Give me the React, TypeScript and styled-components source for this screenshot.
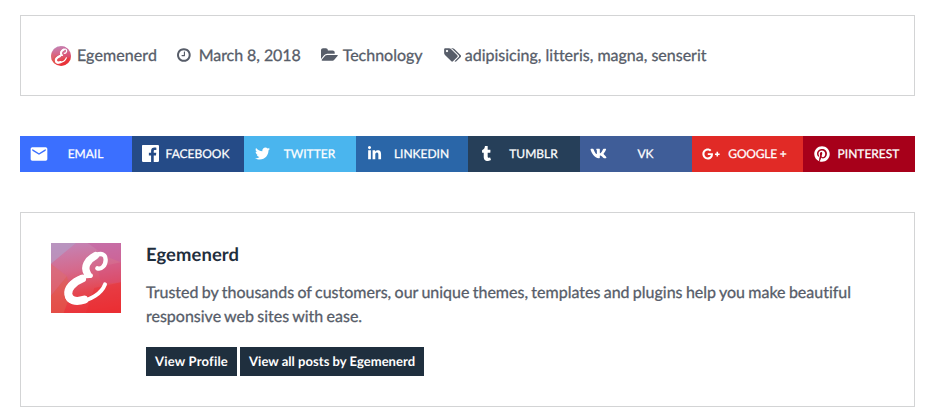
import React from "react";
import styled, { createGlobalStyle } from "styled-components";
import { MdEmail } from "react-icons/md";
import { FaTwitter, FaLinkedinIn, FaTumblr, FaVk, FaGooglePlusG, FaPinterest } from "react-icons/fa";

const GlobalStyle = createGlobalStyle`
  * { box-sizing: border-box; }
  body {
    margin: 0;
    background: #fff;
    color: #575d69;
    font-family: Lato, sans-serif;
    font-size: 16px;
    line-height: 24px;
    font-variant-ligatures: none;
    text-rendering: geometricPrecision;
  }
`;

const Page = styled.main`
  display: flex;
  flex-direction: column;
  gap: 40px;
  width: 929px;
  height: 420px;
  padding: 15px 14px 13px 20px;
`;

const Card = styled.section`
  border: 1px solid #d3d4d5;
  padding: 30px;
`;

const MetaCard = styled(Card)`
  display: flex;
  align-items: center;
  height: 81px;
`;

const MetaItem = styled.div<{ $width?: number; $gap: number }>`
  display: flex;
  align-items: center;
  flex: none;
  width: ${(p) => (p.$width ? `${p.$width}px` : "auto")};
  gap: ${(p) => p.$gap}px;
  white-space: nowrap;
  -webkit-text-stroke: 0.3px currentColor;
`;

const MetaText = styled.span<{ $spacing?: number }>`
  letter-spacing: ${(p) => p.$spacing ?? 0}px;
`;

const MetaIcon = styled.svg`
  display: block;
  flex: none;
  height: 16px;
  margin-bottom: 1px;
  fill: #575d69;
`;

const ShareBar = styled.nav`
  display: grid;
  grid-template-columns: repeat(6, 112px) 111px 112px;
  height: 36px;
`;

const ShareButton = styled.a<{ $color: string }>`
  display: flex;
  align-items: center;
  padding: 0 11px 0 8px;
  background: ${(p) => p.$color};
  color: #fff;
  font-size: 12px;
  line-height: 36px;
  text-transform: uppercase;
`;

const ShareIcon = styled.span`
  display: flex;
  align-items: center;
  justify-content: center;
  flex: none;
  width: 21px;
  height: 20px;
  margin-bottom: 1px;
`;

const ShareLabel = styled.span<{ $tight?: boolean }>`
  flex: 1;
  text-align: center;
  white-space: nowrap;
  padding-left: ${(p) => (p.$tight ? "2px" : "1px")};
  letter-spacing: ${(p) => (p.$tight ? "-0.2px" : "0")};
  -webkit-text-stroke: 0.25px currentColor;
`;

const AuthorCard = styled(Card)`
  display: flex;
  gap: 25px;
  height: 195px;
`;

const Avatar = styled.svg<{ $size: number; $round?: boolean }>`
  display: block;
  flex: none;
  width: ${(p) => p.$size}px;
  height: ${(p) => p.$size}px;
  border-radius: ${(p) => (p.$round ? "50%" : "0")};
`;

const AuthorBody = styled.div`
  flex: 1;
`;

const AuthorName = styled.h3`
  margin: 0 0 15px;
  color: #1f2e3d;
  font-size: 18.4px;
  line-height: 23px;
  font-weight: 700;
  letter-spacing: 0.1px;
`;

const Bio = styled.p`
  margin: 0 0 18px;
  word-spacing: -0.75px;
  -webkit-text-stroke: 0.3px currentColor;
`;

const Actions = styled.div`
  display: flex;
  gap: 3px;
`;

const ActionButton = styled.a<{ $width: number; $spacing: number }>`
  width: ${(p) => p.$width}px;
  height: 29px;
  padding-left: 9px;
  background: #1f2f3e;
  color: #fff;
  font-size: 13px;
  line-height: 29px;
  font-weight: 700;
  letter-spacing: ${(p) => p.$spacing}px;
  white-space: nowrap;
`;

function Logo({ id, size, round }: { id: string; size: number; round?: boolean }) {
  return (
    <Avatar $size={size} $round={round} viewBox="0 0 210 210" role="img" aria-label="Egemenerd">
      <defs>
        <linearGradient id={id} x1="0.4" y1="0" x2="0.55" y2="1">
          <stop offset="0" stopColor="#c582b3" />
          <stop offset="0.38" stopColor="#d6688a" />
          <stop offset="0.7" stopColor="#e5464f" />
          <stop offset="1" stopColor="#ea3338" />
        </linearGradient>
      </defs>
      <rect width="210" height="210" fill={`url(#${id})`} />
      <path d="M0 0h75L0 62z" fill="#b39bc4" opacity=".7" />
      <path d="M110 0h100v58l-45-18z" fill="#c65da0" opacity=".5" />
      <path d="M0 62l48 38L0 158z" fill="#dc6b75" opacity=".7" />
      <path d="M0 210v-52l48-58 10 55-20 55z" fill="#df634f" opacity=".5" />
      <path d="M210 58v60l-60 5-10-50z" fill="#d44c7c" opacity=".4" />
      <path d="M130 135l80-17v92H105z" fill="#eb2a30" opacity=".4" />
      <g fill="none" stroke="#fff" strokeLinecap="round" strokeLinejoin="round">
        <path d="M139 76C152 80 164 67 164 50C164 33 151 30 136 36C113 44 98 67 103 84C106 95 112 98 119 97" strokeWidth="13" />
        <path d="M133 38C110 50 97 72 109 91" strokeWidth="22" />
        <path d="M119 99C86 98 53 119 48 148C45 172 60 180 82 176C119 172 152 151 162 124" strokeWidth="12" />
        <path d="M93 107C66 118 49 137 52 154C55 173 74 178 100 170" strokeWidth="24" />
      </g>
    </Avatar>
  );
}

const FacebookIcon = () => (
  <svg width="17" height="17" viewBox="3 3 18 18" fill="currentColor">
    <path d="M20.007 3H3.993C3.445 3 3 3.445 3 3.993v16.013c0 .55.445.994.993.994h8.62v-6.97H10.27V11.31h2.346V9.31c0-2.325 1.42-3.59 3.494-3.59.993 0 1.847.073 2.096.106v2.43h-1.438c-1.128 0-1.346.537-1.346 1.324v1.734h2.69l-.35 2.717h-2.34V21h4.587c.548 0 .993-.445.993-.993V3.993C21 3.445 20.555 3 20.007 3z" />
  </svg>
);

const networks = [
  { label: "Email", color: "#3b6fff", icon: <MdEmail size={20} /> },
  { label: "Facebook", color: "#254b87", icon: <FacebookIcon /> },
  { label: "Twitter", color: "#4ab5ee", icon: <FaTwitter size={15} /> },
  { label: "LinkedIn", color: "#2a66a8", icon: <FaLinkedinIn size={15} /> },
  { label: "Tumblr", color: "#263f59", icon: <FaTumblr size={15} /> },
  { label: "VK", color: "#3f5d98", icon: <FaVk size={17} /> },
  { label: "Google +", color: "#e12a26", icon: <FaGooglePlusG size={18} />, tight: true },
  { label: "Pinterest", color: "#a7001a", icon: <FaPinterest size={16} /> },
];

export default function App() {
  return (
    <>
      <GlobalStyle />
      <Page>
        <MetaCard>
          <MetaItem $width={126} $gap={6}>
            <Logo id="logo-small" size={20} round />
            <MetaText $spacing={0.1}>Egemenerd</MetaText>
          </MetaItem>
          <MetaItem $width={143.5} $gap={8}>
            <MetaIcon viewBox="128 0 1536 1792">
              <path d="M1024 544v448q0 14-9 23t-23 9h-320q-14 0-23-9t-9-23v-64q0-14 9-23t23-9h224v-352q0-14 9-23t23-9h64q14 0 23 9t9 23zm416 352q0-148-73-273t-198-198-273-73-273 73-198 198-73 273 73 273 198 198 273 73 273-73 198-198 73-273zm224 0q0 209-103 385.5t-279.5 279.5-385.5 103-385.5-103-279.5-279.5-103-385.5 103-385.5 279.5-279.5 385.5-103 385.5 103 279.5 279.5 103 385.5z" />
            </MetaIcon>
            <MetaText $spacing={-0.06}>March 8, 2018</MetaText>
          </MetaItem>
          <MetaItem $width={122} $gap={5}>
            <MetaIcon viewBox="0 0 1920 1792">
              <path d="M1879 952q0 31-31 66l-336 396q-43 51-120.5 86.5t-143.5 35.5h-1088q-34 0-60.5-13t-26.5-43q0-31 31-66l336-396q43-51 120.5-86.5t143.5-35.5h1088q34 0 60.5 13t26.5 43zm-343-344v160h-832q-94 0-197 47.5t-164 119.5l-337 396-5 6q0-4-.5-12.5t-.5-12.5v-960q0-92 66-158t158-66h320q92 0 158 66t66 158v32h544q92 0 158 66t66 158z" />
            </MetaIcon>
            <MetaText>Technology</MetaText>
          </MetaItem>
          <MetaItem $gap={4}>
            <MetaIcon viewBox="0 0 2048 1792">
              <path d="M576 448q0-53-37.5-90.5t-90.5-37.5-90.5 37.5-37.5 90.5 37.5 90.5 90.5 37.5 90.5-37.5 37.5-90.5zm1067 576q0 53-37 90l-491 492q-39 37-91 37-53 0-90-37l-715-716q-38-37-64.5-101t-26.5-117v-416q0-52 38-90t90-38h416q53 0 117 26.5t102 64.5l715 714q37 39 37 91zm384 0q0 53-37 90l-491 492q-39 37-91 37-36 0-59-14t-53-45l470-470q37-37 37-90 0-52-37-91l-715-714q-38-38-102-64.5t-117-26.5h224q53 0 117 26.5t102 64.5l715 714q37 39 37 91z" />
            </MetaIcon>
            <MetaText>adipisicing, litteris, magna, senserit</MetaText>
          </MetaItem>
        </MetaCard>
        <ShareBar>
          {networks.map((n) => (
            <ShareButton key={n.label} $color={n.color}>
              <ShareIcon>{n.icon}</ShareIcon>
              <ShareLabel $tight={n.tight}>{n.label}</ShareLabel>
            </ShareButton>
          ))}
        </ShareBar>
        <AuthorCard>
          <Logo id="logo-large" size={70} />
          <AuthorBody>
            <AuthorName>Egemenerd</AuthorName>
            <Bio>
              Trusted by thousands of customers, our unique themes, templates and plugins help you make beautiful
              responsive web sites with ease.
            </Bio>
            <Actions>
              <ActionButton $width={91} $spacing={0.2}>View Profile</ActionButton>
              <ActionButton $width={184} $spacing={0.04}>View all posts by Egemenerd</ActionButton>
            </Actions>
          </AuthorBody>
        </AuthorCard>
      </Page>
    </>
  );
}
